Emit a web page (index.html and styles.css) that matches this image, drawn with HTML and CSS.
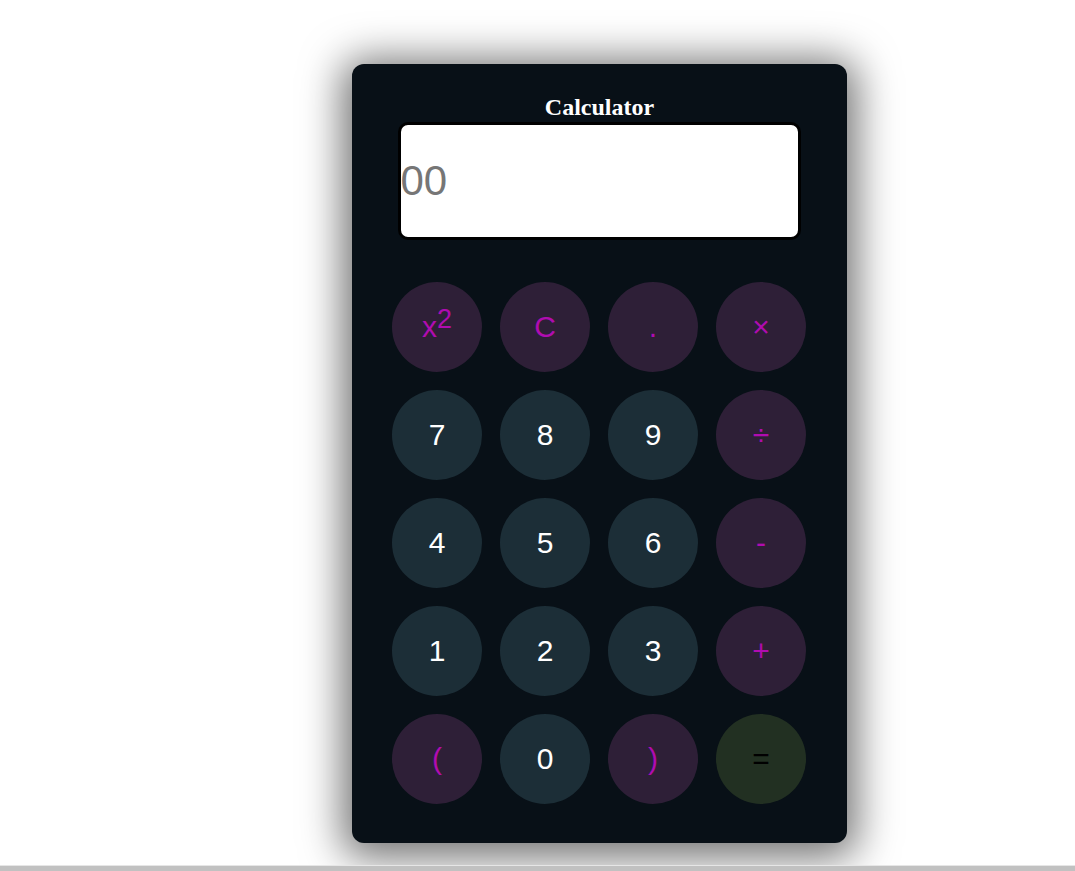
FILE: index.html
```html
<!DOCTYPE html>
<html>
<head>
<meta charset="utf-8">
<title>Calculator</title>
<link rel="stylesheet" href="styles.css">
</head>
<body>
<div class="calc">
  <h2 class="title">Calculator</h2>
  <input class="display" type="text" placeholder="00">
  <div class="keys">
    <button class="key op">x<sup>2</sup></button>
    <button class="key op">C</button>
    <button class="key op">.</button>
    <button class="key op">×</button>
    <button class="key num">7</button>
    <button class="key num">8</button>
    <button class="key num">9</button>
    <button class="key op">÷</button>
    <button class="key num">4</button>
    <button class="key num">5</button>
    <button class="key num">6</button>
    <button class="key op">-</button>
    <button class="key num">1</button>
    <button class="key num">2</button>
    <button class="key num">3</button>
    <button class="key op">+</button>
    <button class="key op">(</button>
    <button class="key num">0</button>
    <button class="key op">)</button>
    <button class="key eq">=</button>
  </div>
</div>
<div class="hbar"></div>
</body>
</html>
```

FILE: styles.css
```css
html, body {
  margin: 0;
  padding: 0;
  background: #ffffff;
}
body {
  height: 871px;
  overflow: hidden;
}
.calc {
  box-sizing: border-box;
  width: 495px;
  height: 779px;
  margin: 64px 0 0 352px;
  background: #081017;
  border-radius: 12px;
  box-shadow: 0 5px 40px 10px rgba(0, 0, 0, 0.55);
  padding: 30px 0 0;
  display: flex;
  flex-direction: column;
  align-items: center;
}
.title {
  margin: 0;
  font-family: "Liberation Serif", "Times New Roman", serif;
  font-weight: bold;
  font-size: 24px;
  color: #ffffff;
  line-height: 27px;
  height: 28px;
}
.display {
  box-sizing: border-box;
  width: 403px;
  height: 118px;
  border: 3px solid #000000;
  border-radius: 10px;
  background: #ffffff;
  padding: 0;
  margin: 0 1px 0 0;
  font-family: "Liberation Sans", Arial, sans-serif;
  font-size: 42px;
  color: #222;
  outline: none;
}
.display::placeholder {
  color: #767676;
}
.keys {
  margin: 42px 1px 0 0;
  display: grid;
  grid-template-columns: repeat(4, 90px);
  grid-auto-rows: 90px;
  gap: 18px;
}
.key {
  width: 90px;
  height: 90px;
  border: none;
  border-radius: 50%;
  padding: 0;
  font-family: "Liberation Sans", Arial, sans-serif;
  font-size: 30px;
  display: flex;
  align-items: center;
  justify-content: center;
}
.key sup {
  font-size: 0.9em;
  line-height: 0;
  position: relative;
  top: -0.3em;
}
.op {
  background: #2e1f37;
  color: #b00cb0;
}
.num {
  background: #1c2e37;
  color: #ffffff;
}
.eq {
  background: #223022;
  color: #000000;
}
.hbar {
  position: fixed;
  left: 0;
  right: 0;
  bottom: 0;
  height: 5px;
  background: #c1c1c1;
  border-top: 1px solid #e6e6e6;
}
```
